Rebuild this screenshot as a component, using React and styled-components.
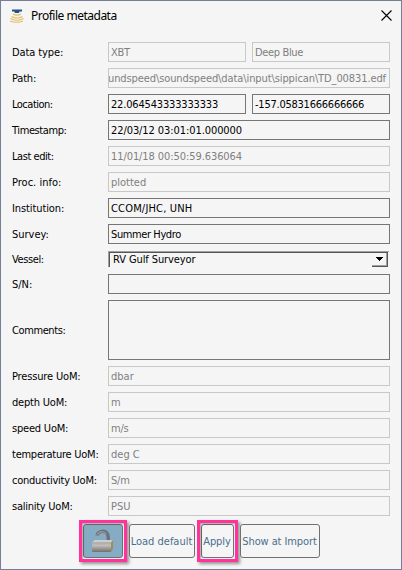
import React from "react";
import styled, { createGlobalStyle } from "styled-components";

const Global = createGlobalStyle`
  * { box-sizing: border-box; }
  html, body { margin: 0; background: #f5f5f5; }
`;

const Dialog = styled.div`
  width: 402px;
  height: 570px;
  border: 1px solid #757f97;
  background: #f5f5f5;
  font-family: "DejaVu Sans Condensed", "DejaVu Sans", sans-serif;
  font-stretch: condensed;
  font-size: 11px;
  color: #000;
  overflow: hidden;
`;

const TitleBar = styled.header`
  display: flex;
  align-items: center;
  height: 29px;
  padding: 0 9px 0 7px;
`;

const Title = styled.h1`
  flex: 1;
  margin: 0 0 0 6px;
  font: 400 12px/16px "Noto Sans", sans-serif;
  letter-spacing: ${(p) => p.$ls}px;
  white-space: nowrap;
`;

const CloseButton = styled.button`
  display: flex;
  padding: 0;
  border: 0;
  background: none;
`;

const Form = styled.main`
  display: flex;
  flex-direction: column;
  gap: 6px;
  padding: 12px 11px 0;
`;

const Row = styled.div`
  display: grid;
  grid-template-columns: 96px minmax(0, 1fr);
  align-items: center;
  height: ${(p) => p.$h || 20}px;
`;

const Label = styled.label`
  padding-top: 1px;
  line-height: 14px;
  letter-spacing: ${(p) => p.$ls || 0}px;
  white-space: nowrap;
`;

const Fields = styled.div`
  display: flex;
  gap: 6px;
  height: 100%;
`;

const Field = styled.div`
  flex: 1 1 0;
  min-width: 0;
  display: flex;
  align-items: center;
  justify-content: ${(p) => (p.$end ? "flex-end" : "flex-start")};
  padding: 2px ${(p) => (p.$end ? 3 : 2)}px 0 2px;
  border: 1px solid ${(p) => (p.$off ? "#c8c8c8" : "#767676")};
  color: ${(p) => (p.$off ? "#808080" : "#000")};
  overflow: hidden;
`;

const Value = styled.span`
  flex: none;
  line-height: 14px;
  white-space: nowrap;
  letter-spacing: ${(p) => p.$ls || 0}px;
`;

const Select = styled.div`
  flex: 1;
  display: flex;
  height: 16px;
  margin: 0 1px 1px 0;
  border-top: 1px solid #a0a0a0;
  border-left: 1px solid #a0a0a0;
`;

const SelectInner = styled.div`
  flex: 1;
  display: flex;
  justify-content: space-between;
  align-items: center;
  margin-right: 1px;
  padding-left: 3px;
  border-top: 1px solid #565656;
  border-left: 1px solid #565656;
`;

const Arrow = styled.span`
  display: flex;
  align-items: center;
  justify-content: center;
  width: 16px;
  height: 14px;
  border-right: 1px solid #565656;
  border-bottom: 1px solid #565656;
  box-shadow: inset -1px -1px #a0a0a0;
`;

const Actions = styled.footer`
  display: flex;
  justify-content: center;
  gap: 6px;
  margin-top: 8px;
`;

const Button = styled.button`
  position: relative;
  display: flex;
  align-items: center;
  justify-content: center;
  width: ${(p) => p.$w}px;
  height: 34px;
  padding: ${(p) => (p.$on ? 0 : "1px 0 0")};
  border: 1px solid #707070;
  border-radius: 3px;
  background: ${(p) => (p.$on ? "#86abc4" : "#f5f5f5")};
  color: #4b6f8c;
  font: inherit;
`;

const Highlight = styled.span`
  position: absolute;
  inset: -5px;
  border: 3px solid #ff3399;
  box-shadow: 2px 2px 3px rgba(0, 0, 0, 0.4), inset 1px 1px 2px rgba(0, 0, 0, 0.35);
`;

const ROWS = [
  ["Data type:", -0.1, [["XBT", 1, -0.3], ["Deep Blue", 1, -0.35]]],
  ["Path:", -0.2, [["undspeed\\soundspeed\\data\\input\\sippican\\TD_00831.edf", 1, -0.1, 1]]],
  ["Location:", -0.5, [["22.064543333333333", 0, -0.17], ["-157.05831666666666", 0, -0.24]]],
  ["Timestamp:", -0.4, [["22/03/12 03:01:01.000000", 0, -0.08]]],
  ["Last edit:", -0.45, [["11/01/18 00:50:59.636064", 1, -0.08]]],
  ["Proc. info:", 0, [["plotted", 1, 0]]],
  ["Institution:", -0.1, [["CCOM/JHC, UNH", 0, 0.18]]],
  ["Survey:", 0, [["Summer Hydro", 0, -0.4]]],
];

const MORE = [
  ["S/N:", 0, [["", 0, 0]]],
  ["Comments:", -0.4, [["", 0, 0]], 60],
  ["Pressure UoM:", -0.15, [["dbar", 1, 0]]],
  ["depth UoM:", -0.2, [["m", 1, 0]]],
  ["speed UoM:", -0.2, [["m/s", 1, -0.2]]],
  ["temperature UoM:", -0.25, [["deg C", 1, 0]]],
  ["conductivity UoM:", -0.25, [["S/m", 1, -0.2]]],
  ["salinity UoM:", -0.25, [["PSU", 1, 0]]],
];

function FormRow({ row: [label, ls, fields, height] }) {
  return (
    <Row $h={height}>
      <Label $ls={ls}>{label}</Label>
      <Fields>
        {fields.map(([text, off, spacing, end], i) => (
          <Field key={i} $off={off} $end={end}>
            <Value $ls={spacing}>{text}</Value>
          </Field>
        ))}
      </Fields>
    </Row>
  );
}

const AppIcon = () => (
  <svg width="17" height="16" viewBox="0 0 17 16" fill="none">
    <path d="M4 1.500h10v2h-2.500L11 5H7l-.7-1.500H4z" fill="#245487" />
    <g stroke="#e5bd5f" strokeWidth="1.200">
      <path d="M5 6q4 2.400 8 0M3.500 8.500q5.500 3 11 0M2.500 10.500q6.500 3.500 13 0M2 13q6.500 2.500 13 0" />
    </g>
  </svg>
);

const CloseIcon = () => (
  <svg width="11" height="11" viewBox="0 0 11 11">
    <path d="M.5.5l10 10M10.500.5l-10 10" stroke="#000" strokeWidth="1.100" />
  </svg>
);

const LockIcon = () => (
  <svg width="26" height="26" viewBox="0 0 26 26">
    <defs>
      <linearGradient id="body" x1="0" y1="0" x2="0" y2="1">
        <stop offset="0" stopColor="#aaa8a4" />
        <stop offset="0.3" stopColor="#c2c0bd" />
        <stop offset="1" stopColor="#716e6d" />
      </linearGradient>
    </defs>
    <path d="M7 7.500C8 3 15 1.500 17.500 6c1 2 .8 4 .8 6" fill="none" stroke="#6d7276" strokeWidth="3.400" />
    <path d="M7 7C9 3 14 2.500 16.500 6" fill="none" stroke="#90969a" strokeWidth="1.200" />
    <path d="M2 14.500L4.500 12H23l-2 2.500z" fill="#d0cecb" />
    <rect x="2" y="14.500" width="19" height="9.500" rx="1" fill="url(#body)" />
    <path d="M21 14.500l2-2.500v9l-2 3z" fill="#a28d55" />
  </svg>
);

export default function App() {
  return (
    <>
      <Global />
      <Dialog>
        <TitleBar>
          <AppIcon />
          <Title $ls={-0.5}>Profile metadata</Title>
          <CloseButton aria-label="Close"><CloseIcon /></CloseButton>
        </TitleBar>
        <Form>
          {ROWS.map((r) => <FormRow key={r[0]} row={r} />)}
          <Row $h={18}>
            <Label $ls={-0.4}>Vessel:</Label>
            <Select>
              <SelectInner>
                <Value $ls={-0.1}>RV Gulf Surveyor</Value>
                <Arrow>
                  <svg width="7" height="4" viewBox="0 0 7 4" shapeRendering="crispEdges">
                    <path d="M0 0h7v1H6v1H5v1H4v1H3V3H2V2H1V1H0z" />
                  </svg>
                </Arrow>
              </SelectInner>
            </Select>
          </Row>
          {MORE.map((r) => <FormRow key={r[0]} row={r} />)}
        </Form>
        <Actions>
          <Button $w={40} $on aria-label="Unlock"><LockIcon /><Highlight /></Button>
          <Button $w={66}><Value>Load default</Value></Button>
          <Button $w={33}><Value $ls={-0.1}>Apply</Value><Highlight /></Button>
          <Button $w={80}><Value $ls={-0.1}>Show at Import</Value></Button>
        </Actions>
      </Dialog>
    </>
  );
}
